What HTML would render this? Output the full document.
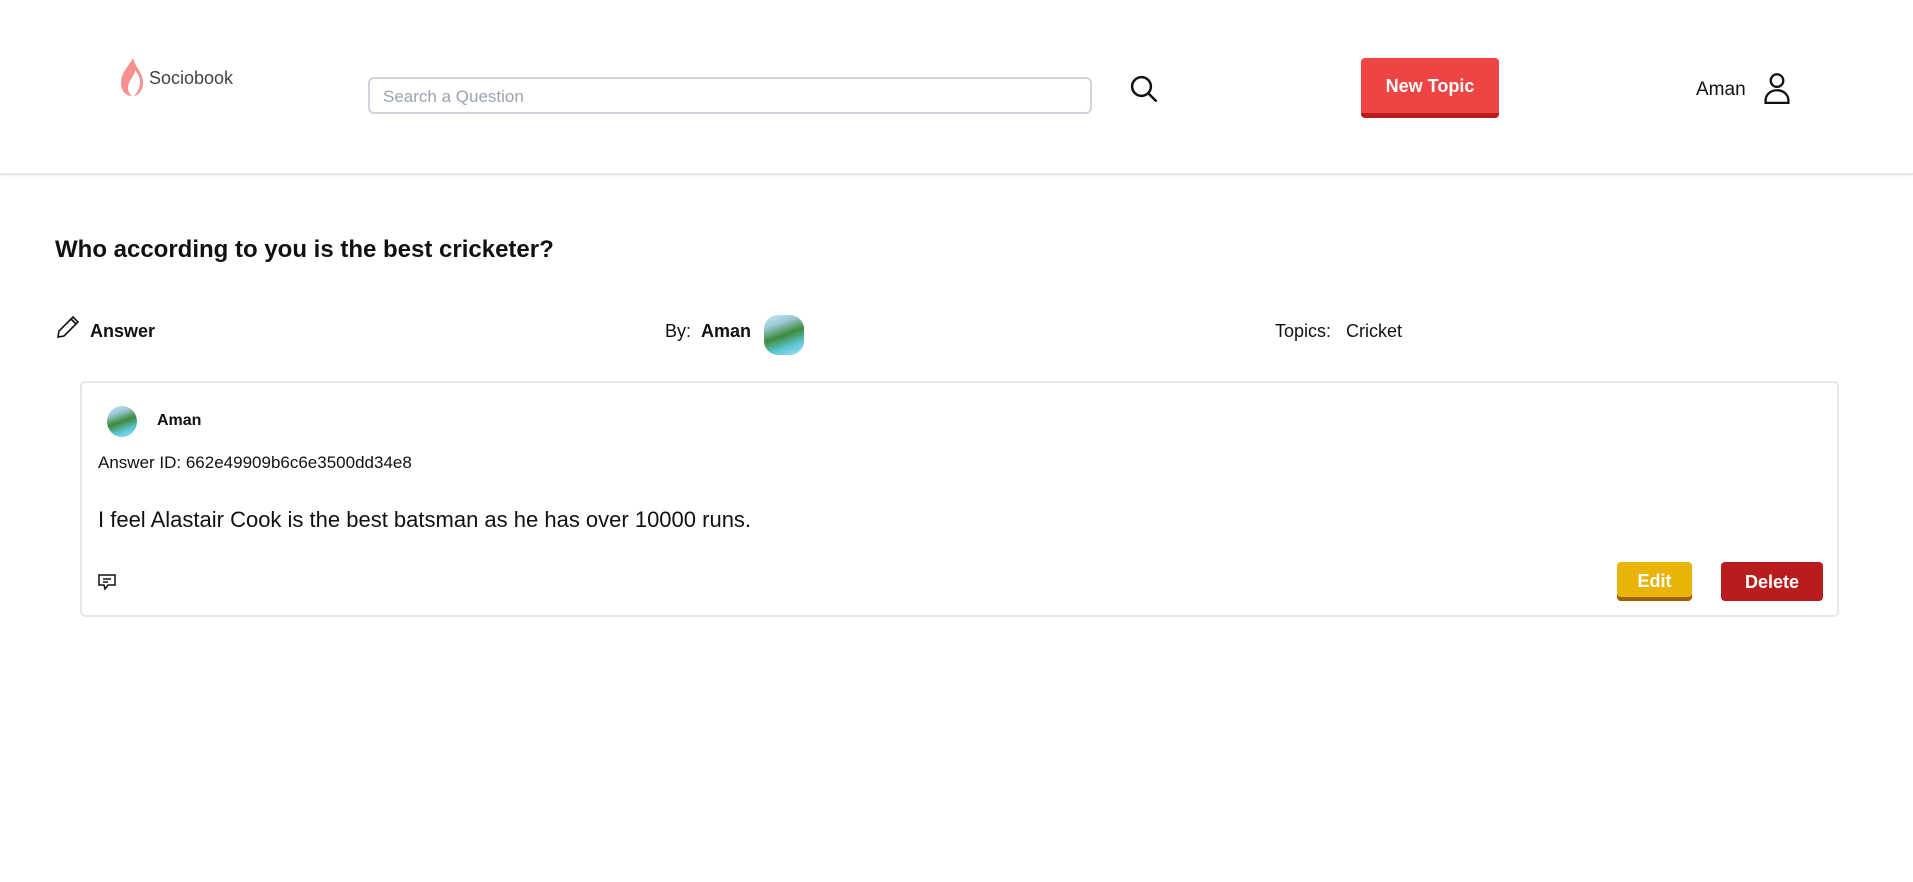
<!DOCTYPE html>
<html><head><meta charset="utf-8"><style>
*{box-sizing:border-box;margin:0;padding:0}
body{width:1913px;height:882px;background:#fff;font-family:"Liberation Sans",sans-serif;color:#111;position:relative;overflow:hidden}
.abs{position:absolute}
header{position:absolute;left:0;top:0;width:1913px;height:175px;border-bottom:2px solid #e5e7eb;box-shadow:0 1px 3px rgba(0,0,0,.05)}
.btn{position:absolute;color:#fff;font-weight:bold;font-size:18px;display:flex;align-items:center;justify-content:center;border-radius:4px;line-height:1}
</style></head><body>
<header>
<svg class="abs" style="left:119px;top:58px" width="26" height="38" viewBox="0 0 26 38"><path d="M14 0C10 8 2 14 2 25c0 8 5 13 11 13-4-3-5-8-3-13 2-5 6-8 6-13 3 4 5 7 5 12 0 6-3 11-6 14 5-1 9-6 9-13C24 14 16 9 14 0z" fill="#f79191"/></svg>
<div class="abs" style="left:149px;top:68px;font-size:18px;color:#444">Sociobook</div>
<div class="abs" style="left:368px;top:77px;width:724px;height:37px;border:2px solid #d1d5db;border-radius:6px;padding:8px 13px;font-size:17px;color:#9ca3af">Search a Question</div>
<svg class="abs" style="left:1129px;top:74px" width="30" height="30" viewBox="0 0 24 24" fill="none" stroke="#111" stroke-width="2"><circle cx="10" cy="10" r="7.5"/><path d="M15.5 15.5L22 22"/></svg>
<div class="btn" style="left:1361px;top:58px;width:138px;height:60px;background:#ef4444;border-bottom:5px solid #b91c1c">New Topic</div>
<div class="abs" style="left:1696px;top:79px;font-size:19px">Aman</div>
<svg class="abs" style="left:1763px;top:72px" width="28" height="32" viewBox="0 0 24 28" fill="none" stroke="#111" stroke-width="2"><circle cx="12" cy="7.5" r="5.5"/><path d="M2 27v-2c0-5 4-9 10-9s10 4 10 9v2z"/></svg>
</header>
<div class="abs" style="left:55px;top:236px;font-size:24px;font-weight:bold">Who according to you is the best cricketer?</div>
<svg class="abs" style="left:56px;top:315px" width="24" height="24" viewBox="0 0 24 24" fill="none" stroke="#111" stroke-width="1.6"><path d="M17 2l5 5L8 21l-6 1 1-6z"/><path d="M15 4l5 5"/></svg>
<div class="abs" style="left:90px;top:321px;font-size:18px;font-weight:bold">Answer</div>
<div class="abs" style="left:665px;top:321px;font-size:18px">By:&nbsp; <b>Aman</b></div>
<div class="abs" style="left:764px;top:315px;width:40px;height:40px;border-radius:14px;background:linear-gradient(160deg,#cde9f5 0%,#9cc9d8 25%,#3e8a3a 50%,#5cc7d8 75%,#a5e3ef 100%)"></div>
<div class="abs" style="left:1275px;top:321px;font-size:18px">Topics:&nbsp;&nbsp; Cricket</div>
<div class="abs" style="left:80px;top:381px;width:1759px;height:236px;border:2px solid #e5e7eb;border-radius:5px"></div>
<div class="abs" style="left:107px;top:406px;width:30px;height:31px;border-radius:50%;background:linear-gradient(160deg,#cde9f5 0%,#9cc9d8 25%,#3e8a3a 50%,#5cc7d8 75%,#a5e3ef 100%)"></div>
<div class="abs" style="left:157px;top:412px;font-size:16px;font-weight:bold">Aman</div>
<div class="abs" style="left:98px;top:453px;font-size:17px">Answer ID: 662e49909b6c6e3500dd34e8</div>
<div class="abs" style="left:98px;top:507px;font-size:22px">I feel Alastair Cook is the best batsman as he has over 10000 runs.</div>
<svg class="abs" style="left:97px;top:572px" width="20" height="20" viewBox="0 0 20 20" fill="none" stroke="#111" stroke-width="1.5"><path d="M2 3h16v10H11l-3 4-1-4H2z"/><path d="M6 7h8M6 10h5"/></svg>
<div class="btn" style="left:1617px;top:562px;width:75px;height:39px;background:#eab308;box-shadow:inset 0 -4px 0 #a16207;padding-bottom:2px">Edit</div>
<div class="btn" style="left:1721px;top:562px;width:102px;height:39px;background:#b91c1c">Delete</div>
</body></html>
